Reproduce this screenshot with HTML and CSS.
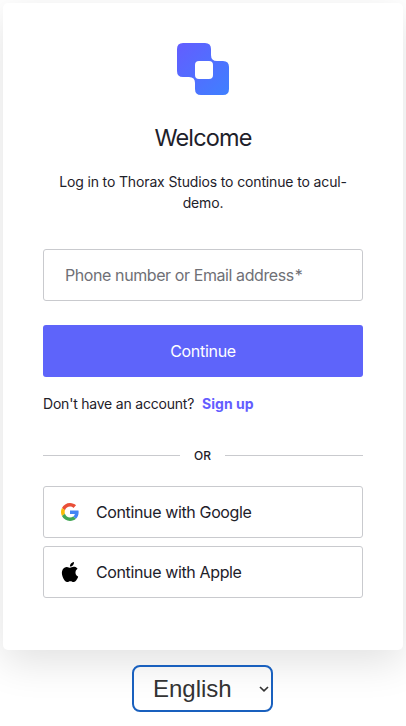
FILE: index.html
```html
<!DOCTYPE html>
<html lang="en">
<head>
<meta charset="utf-8">
<title>Welcome</title>
<link rel="stylesheet" href="styles.css">
</head>
<body>
<main class="card">
  <svg class="logo" viewBox="0 0 52 52" aria-hidden="true">
    <defs><linearGradient id="brand" x1="0" y1="0" x2="1" y2="1"><stop offset="0" stop-color="#635dff"/><stop offset="1" stop-color="#3f80ff"/></linearGradient></defs>
    <path fill="url(#brand)" fill-rule="evenodd" d="M6 0H28Q34 0 34 6V12Q34 18 40 18H46Q52 18 52 24V46Q52 52 46 52H24Q18 52 18 46V40Q18 34 12 34H6Q0 34 0 28V6Q0 0 6 0ZM22 18Q18 18 18 22V32Q18 36 22 36H32Q36 36 36 32V22Q36 18 32 18Z"/>
  </svg>
  <h1 class="title">Welcome</h1>
  <p class="intro">Log in to Thorax Studios to continue to acul-<br>demo.</p>
  <form class="form">
    <div class="field">Phone number or Email address<span class="required">*</span></div>
    <button class="submit" type="button">Continue</button>
  </form>
  <p class="signup"><span class="question">Don't have an account?</span><a class="link">Sign up</a></p>
  <div class="divider"><span class="divider-text">OR</span></div>
  <div class="providers">
    <button class="provider" type="button">
      <svg class="icon" viewBox="0 0 48 48" aria-hidden="true">
        <path fill="#e94f38" d="M24 9.5c3.54 0 6.71 1.22 9.21 3.6l6.85-6.85C35.9 2.38 30.47 0 24 0 14.62 0 6.51 5.38 2.56 13.22l7.98 6.19C12.43 13.72 17.74 9.5 24 9.5z"/>
        <path fill="#4285f4" d="M46.98 24.55c0-1.57-.15-3.09-.38-4.55H24v9.02h12.94c-.58 2.96-2.26 5.48-4.78 7.18l7.73 6c4.51-4.18 7.09-10.36 7.09-17.65z"/>
        <path fill="#fbbc05" d="M10.53 28.59c-.48-1.45-.76-2.99-.76-4.59s.27-3.14.76-4.59l-7.98-6.19C.92 16.46 0 20.12 0 24c0 3.88.92 7.54 2.56 10.78l7.97-6.19z"/>
        <path fill="#42a655" d="M24 48c6.48 0 11.93-2.13 15.89-5.81l-7.73-6c-2.15 1.45-4.92 2.3-8.16 2.3-6.26 0-11.57-4.22-13.47-9.91l-7.98 6.19C6.51 42.62 14.62 48 24 48z"/>
      </svg>
      <span class="provider-name">Continue with Google</span>
    </button>
    <button class="provider" type="button">
      <svg class="icon icon-apple" viewBox="2 0 20 24" aria-hidden="true">
        <path d="M12.152 6.896c-.948 0-2.415-1.078-3.96-1.04-2.04.027-3.91 1.183-4.961 3.014-2.117 3.675-.546 9.103 1.519 12.09 1.013 1.454 2.208 3.09 3.792 3.039 1.52-.065 2.09-.987 3.935-.987 1.831 0 2.35.987 3.96.948 1.637-.026 2.676-1.48 3.676-2.948 1.156-1.688 1.636-3.325 1.662-3.415-.039-.013-3.182-1.221-3.22-4.857-.026-3.04 2.48-4.494 2.597-4.559-1.429-2.09-3.623-2.324-4.39-2.376-2-.156-3.675 1.09-4.61 1.09zM15.53 3.83c.843-1.012 1.4-2.427 1.245-3.83-1.207.052-2.662.805-3.532 1.818-.78.896-1.454 2.338-1.273 3.714 1.338.104 2.715-.688 3.559-1.701"/>
      </svg>
      <span class="provider-name">Continue with Apple</span>
    </button>
  </div>
</main>
<div class="language">
  <span>English</span>
  <svg class="chevron" viewBox="0 0 10 6" aria-hidden="true"><path d="M1 1L5 4.8L9 1"/></svg>
</div>
</body>
</html>
```
FILE: styles.css
```css
* { box-sizing: border-box; }
body {
  margin: 0;
  padding: 3px 3px 0;
  height: 726px;
  overflow: hidden;
  background: #fff;
  color: #1e212a;
  font-family: Inter, sans-serif;
}
.card {
  display: flex;
  flex-direction: column;
  height: 647px;
  padding: 40px;
  background: #fff;
  border-radius: 5px;
  box-shadow: 0 12px 40px rgba(0, 0, 0, 0.12);
}
.logo { width: 52px; height: 52px; align-self: center; }
.title {
  margin: 24px 0 0;
  font-size: 23.5px;
  line-height: 38px;
  font-weight: 400;
  text-align: center;
  letter-spacing: -0.85px;
}
.intro {
  margin: 14px 0 0;
  font-size: 14px;
  line-height: 21px;
  text-align: center;
  letter-spacing: -0.14px;
}
.form { display: flex; flex-direction: column; gap: 24px; margin-top: 36px; }
.field {
  height: 52px;
  padding-left: 21px;
  border: 1px solid #c9cace;
  border-radius: 3px;
  color: #6f7076;
  font-size: 16px;
  line-height: 50px;
  white-space: nowrap;
  letter-spacing: -0.41px;
}
.required { margin-left: 1px; }
.submit {
  height: 52px;
  padding: 0;
  border: 0;
  border-radius: 3px;
  background: #5e64fa;
  color: #fff;
  font: 400 16px Inter, sans-serif;
  letter-spacing: -0.3px;
}
.signup {
  display: flex;
  gap: 8px;
  margin: 16px 0 0;
  font-size: 14px;
  line-height: 22px;
}
.question { letter-spacing: -0.21px; }
.link { color: #635dff; font-weight: 700; }
.divider {
  display: flex;
  align-items: center;
  gap: 14px;
  height: 20px;
  margin-top: 30px;
  padding-right: 1px;
  margin-right: -1px;
  font-size: 12px;
  font-weight: 500;
}
.divider::before, .divider::after {
  content: "";
  height: 1px;
  background: #c9cace;
}
.divider::before { width: 137px; }
.divider::after { flex: 1; }
.providers { display: flex; flex-direction: column; gap: 8px; margin-top: 21px; }
.provider {
  display: flex;
  align-items: center;
  height: 52px;
  padding: 0 17px;
  border: 1px solid #c9cace;
  border-radius: 3px;
  background: #fff;
  color: #1e212a;
  font: 400 16px Inter, sans-serif;
  letter-spacing: -0.37px;
}
.icon { width: 18px; height: 18px; margin-right: 17px; }
.icon-apple { height: 20px; }
.language {
  display: flex;
  align-items: center;
  justify-content: space-between;
  width: 141px;
  height: 47px;
  margin: 15px auto 0 129px;
  padding: 0 2px 0 19px;
  border: 2px solid #1960be;
  border-radius: 8px;
  color: #333;
  font: 24px "Liberation Sans", sans-serif;
}
.chevron {
  width: 10px;
  height: 6px;
  fill: none;
  stroke: #333;
  stroke-width: 1.7;
}
```
